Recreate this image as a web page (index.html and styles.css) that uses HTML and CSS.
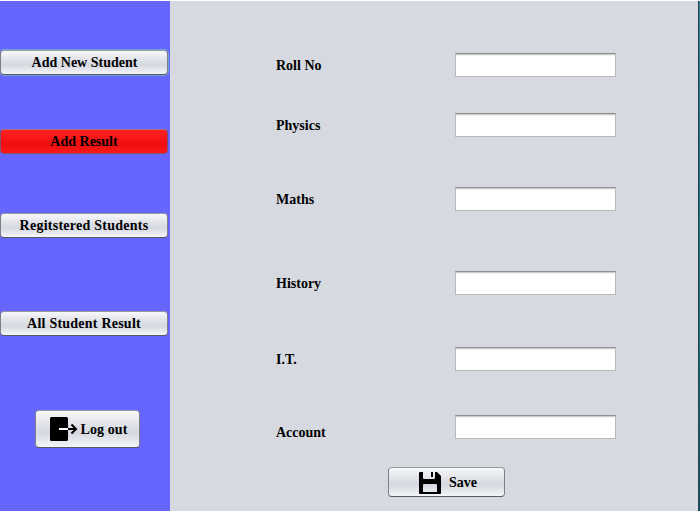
FILE: index.html
```html
<!DOCTYPE html>
<html lang="en">
<head>
<meta charset="utf-8">
<title>Add Result</title>
<link rel="stylesheet" href="styles.css">
</head>
<body>
<div class="window">
  <nav class="sidebar">
    <button class="btn nav-btn focused">Add New Student</button>
    <button class="btn nav-btn active">Add Result</button>
    <button class="btn nav-btn registered">Regitstered Students</button>
    <button class="btn nav-btn results">All Student Result</button>
    <button class="btn logout">
      <svg width="28" height="26" viewBox="0 0 28 26" aria-hidden="true">
        <rect x="0" y="1" width="18" height="24" rx="1.5" fill="#000"/>
        <path d="M9 13H18" stroke="#fff" stroke-width="2"/>
        <path d="M18 13H26M21.5 8.5L26 13L21.5 17.5" fill="none" stroke="#000" stroke-width="2"/>
      </svg>
      <span>Log out</span>
    </button>
  </nav>
  <main class="content">
    <form class="form">
      <label for="roll">Roll No</label><input id="roll">
      <label for="physics">Physics</label><input id="physics">
      <label for="maths">Maths</label><input id="maths">
      <label for="history">History</label><input id="history">
      <label for="it">I.T.</label><input id="it">
      <label for="account" class="low">Account</label><input id="account">
    </form>
    <button class="btn save">
      <svg width="22" height="22" viewBox="0 0 22 22" aria-hidden="true">
        <path fill="#000" fill-rule="evenodd" d="M1 0H4V6Q4 7 5 7H15Q16 7 16 6V0H18L22 4V21Q22 22 21 22H1Q0 22 0 21V1Q0 0 1 0ZM5 12Q4 12 4 13V20H18V13Q18 12 17 12Z"/>
        <path fill="#000" d="M12 0H14V5H12Z"/>
      </svg>
      <span>Save</span>
    </button>
  </main>
  <div class="edge"></div>
</div>
</body>
</html>
```
FILE: styles.css
```css
* { box-sizing: border-box; }
body {
  margin: 0;
  width: 700px;
  height: 511px;
  overflow: hidden;
  background: #fff;
  font: bold 14px/16px "Liberation Serif", serif;
  color: #000;
}
.window {
  display: flex;
  height: 510px;
  margin-top: 1px;
  background: #d6d9e0;
}
.sidebar {
  width: 170px;
  background: #6666ff;
  display: flex;
  flex-direction: column;
  align-items: flex-start;
  padding-top: 49px;
}
.btn {
  display: flex;
  align-items: center;
  justify-content: center;
  padding: 0;
  border: 1px solid #7c7f86;
  border-top-color: #96999f;
  border-bottom-color: #565a61;
  border-radius: 4px;
  background: linear-gradient(#f7f8fa 0%, #e2e4ea 35%, #d5d8df 60%, #dfe2e8 75%, #f5f6fa 100%);
  font: inherit;
  color: #000;
  white-space: nowrap;
}
.nav-btn { width: 168px; height: 25px; flex: none; }
.focused { padding-left: 1px; box-shadow: 0 0 0 1px #73a4d1; }
.active {
  margin-top: 54px;
  border-color: #a77 #885068 #85556d;
  background: linear-gradient(#ff2020 0%, #fa1717 35%, #ed0e0e 60%, #ff1919 100%);
}
.registered { margin-top: 59px; letter-spacing: 0.25px; }
.results { margin-top: 73px; letter-spacing: 0.23px; }
.logout { width: 105px; height: 38px; margin: 74px 0 0 35px; padding: 1px 0 0 2px; gap: 3px; letter-spacing: 0.1px; }
.logout svg { margin-top: -1px; }
.content { flex: 1; }
.edge {
  width: 2px;
  border-left: 1px solid #34404a;
  background: linear-gradient(#2a8493, #187282 30%, #0c7078 65%, #0b5060);
}
.form {
  display: grid;
  grid-template-columns: 179px 161px;
  grid-template-rows: 60px 74px 84px 76px 68px 24px;
  padding: 52px 0 0 106px;
}
.form label { height: 24px; padding-top: 5px; }
.form .low { padding-top: 10px; }
.form input {
  width: 161px;
  height: 24px;
  padding: 0 6px;
  border: 1px solid #b8b9bb;
  border-top-color: #8c8d90;
  border-radius: 0;
  background: #fff;
  box-shadow: inset 0 1px #cdcdce, inset 0 2px #efefef;
  font: inherit;
}
.save { width: 117px; height: 31px; margin: 27px 0 0 218px; padding: 1px 0 0 3px; gap: 8px; }
.save { margin-top: 28px; height: 30px; }
svg { display: block; flex: none; }
```
